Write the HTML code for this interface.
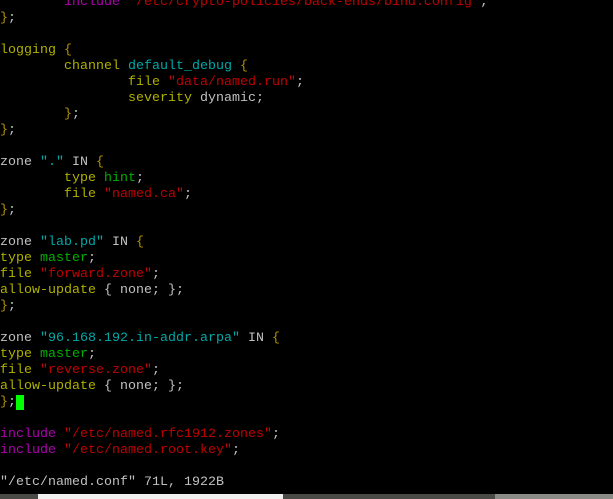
<!DOCTYPE html>
<html><head><style>
html,body{margin:0;padding:0;background:#000;width:613px;height:499px;overflow:hidden}
pre{margin:0;position:absolute;top:-5px;left:0;font-family:"Liberation Mono",monospace;font-size:13.33px;line-height:16px;color:#c0c0c0;white-space:pre}
.y{color:#b0b000}.c{color:#00a8a8}.r{color:#c00000}.m{color:#b000b0}.g{color:#00b000}.o{color:#b09000}
.cur{background:#00ff00;color:#00ff00}
.bar{position:absolute;left:0;top:494px;width:613px;height:5px;background:#4a4a46}
.box{position:absolute;left:38px;top:494px;width:245px;height:5px;background:#f0f0f0}
.box2{position:absolute;left:495px;top:494px;width:118px;height:5px;background:#8a8a86}
</style></head><body>
<pre>        <span class="m">include</span> <span class="r">"/etc/crypto-policies/back-ends/bind.config"</span>;
<span class="o">}</span>;

<span class="y">logging</span> <span class="o">{</span>
        <span class="y">channel</span> <span class="c">default_debug</span> <span class="o">{</span>
                <span class="y">file</span> <span class="r">"data/named.run"</span>;
                <span class="y">severity</span> dynamic;
        <span class="o">}</span>;
<span class="o">}</span>;

zone <span class="c">"."</span> IN <span class="o">{</span>
        <span class="y">type</span> <span class="g">hint</span>;
        <span class="y">file</span> <span class="r">"named.ca"</span>;
<span class="o">}</span>;

zone <span class="c">"lab.pd"</span> IN <span class="o">{</span>
<span class="y">type</span> <span class="g">master</span>;
<span class="y">file</span> <span class="r">"forward.zone"</span>;
<span class="y">allow-update</span> { none; };
<span class="o">}</span>;

zone <span class="c">"96.168.192.in-addr.arpa"</span> IN <span class="o">{</span>
<span class="y">type</span> <span class="g">master</span>;
<span class="y">file</span> <span class="r">"reverse.zone"</span>;
<span class="y">allow-update</span> { none; };
<span class="o">}</span>;<span class="cur"> </span>

<span class="m">include</span> <span class="r">"/etc/named.rfc1912.zones"</span>;
<span class="m">include</span> <span class="r">"/etc/named.root.key"</span>;

"/etc/named.conf" 71L, 1922B</pre>
<div class="bar"></div><div class="box"></div><div class="box2"></div>
</body></html>
